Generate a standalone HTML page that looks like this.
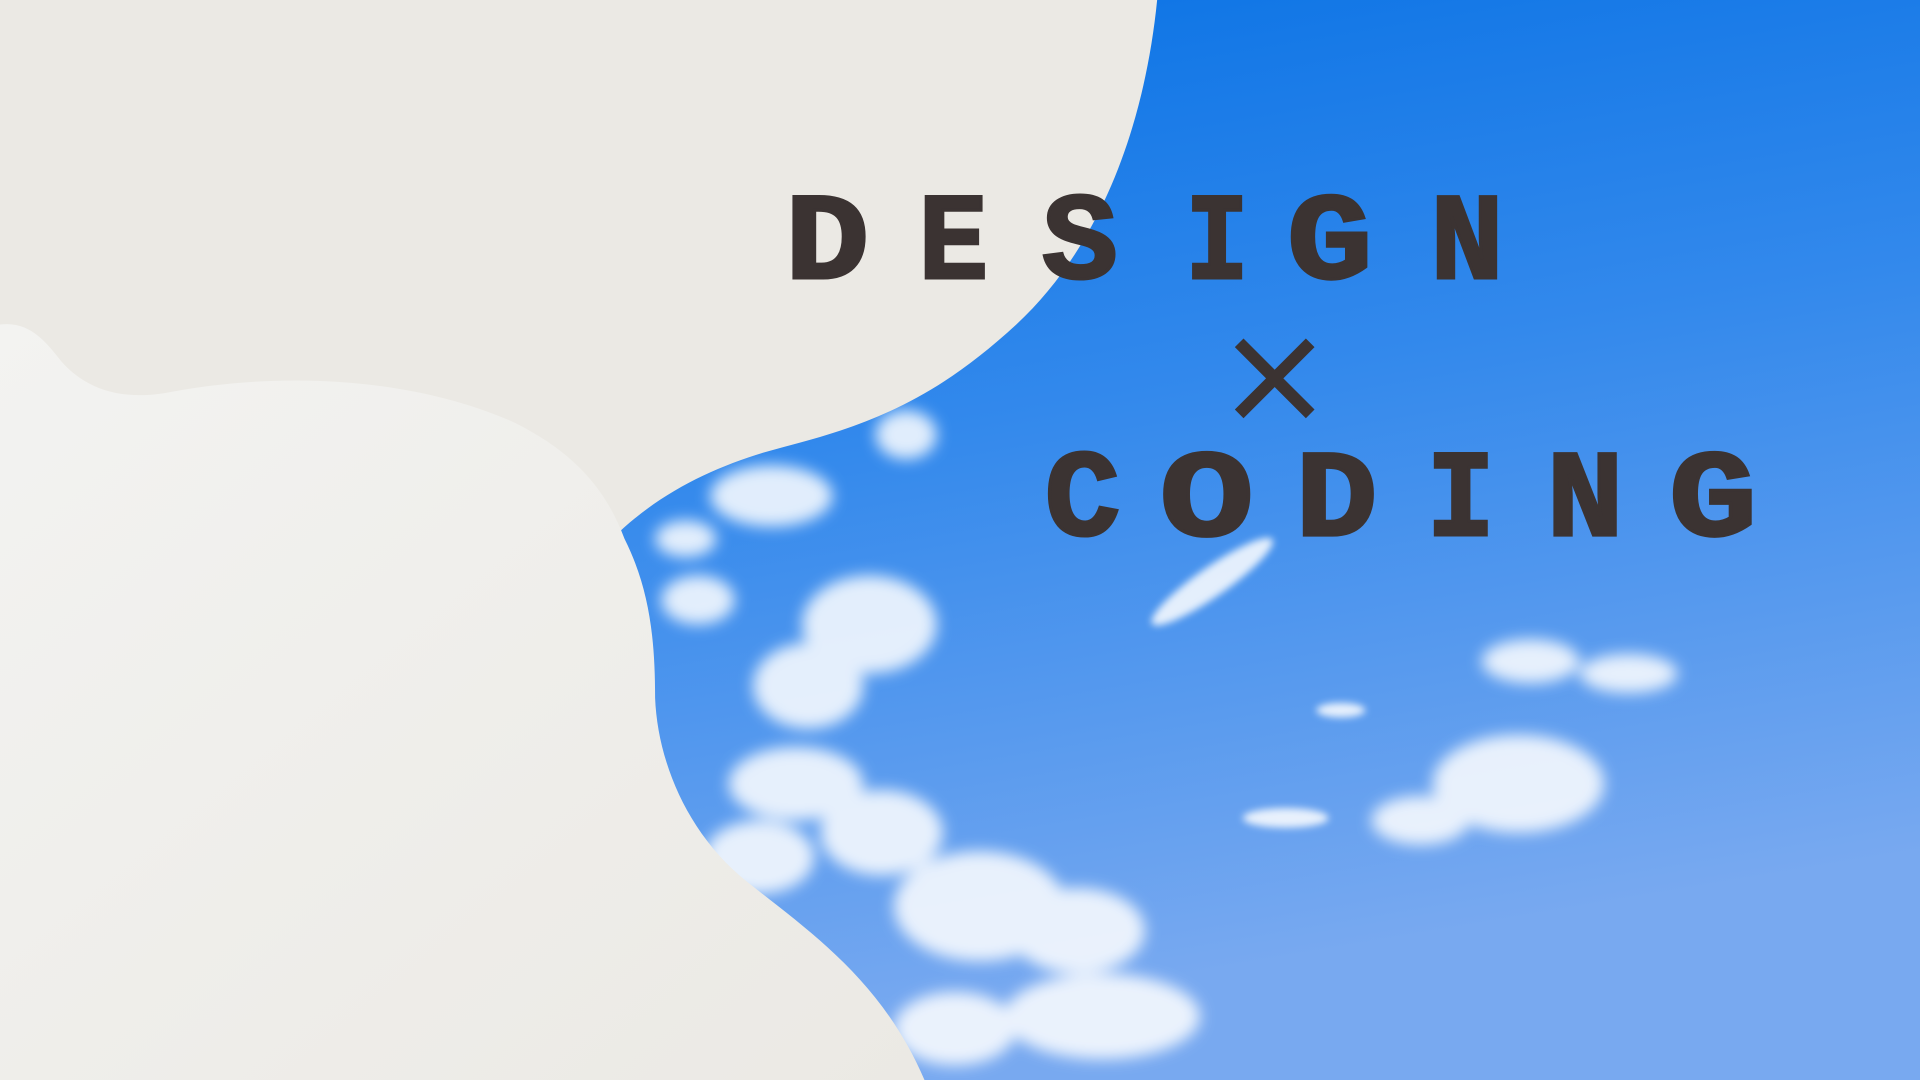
<!DOCTYPE html>
<html><head><meta charset="utf-8"><style>
html,body{margin:0;padding:0;width:1920px;height:1080px;overflow:hidden;background:#ebe9e4}
svg{display:block}
</style></head><body>
<svg width="1920" height="1080" viewBox="0 0 1568 882" preserveAspectRatio="none" xmlns="http://www.w3.org/2000/svg">
<defs>
<linearGradient id="sky" x1="0" y1="0" x2="0.3" y2="1">
<stop offset="0" stop-color="#006de3"/>
<stop offset="0.5" stop-color="#3389ec"/>
<stop offset="1" stop-color="#78a9f0"/>
</linearGradient>
<linearGradient id="low" x1="0" y1="0" x2="1" y2="1">
<stop offset="0" stop-color="#f3f3f1"/>
<stop offset="1" stop-color="#ebe9e4"/>
</linearGradient>
<filter id="bl" x="-50%" y="-50%" width="200%" height="200%"><feGaussianBlur stdDeviation="6"/></filter>
<filter id="bl2" x="-50%" y="-50%" width="200%" height="200%"><feGaussianBlur stdDeviation="3"/></filter>
</defs>
<rect width="1568" height="882" fill="url(#sky)"/>
<g fill="#ffffff" opacity="0.85" filter="url(#bl)">
<ellipse cx="710" cy="510" rx="55" ry="40"/>
<ellipse cx="660" cy="560" rx="45" ry="35"/>
<ellipse cx="650" cy="640" rx="55" ry="30"/>
<ellipse cx="720" cy="680" rx="50" ry="35"/>
<ellipse cx="620" cy="700" rx="45" ry="30"/>
<ellipse cx="800" cy="740" rx="70" ry="45"/>
<ellipse cx="880" cy="760" rx="55" ry="35"/>
<ellipse cx="900" cy="830" rx="80" ry="35"/>
<ellipse cx="780" cy="840" rx="50" ry="30"/>
<ellipse cx="630" cy="405" rx="50" ry="25"/>
<ellipse cx="740" cy="355" rx="25" ry="20"/>
<ellipse cx="570" cy="490" rx="30" ry="20"/>
<ellipse cx="560" cy="440" rx="25" ry="15"/>
<ellipse cx="1240" cy="640" rx="70" ry="40"/>
<ellipse cx="1160" cy="670" rx="40" ry="20"/>
<ellipse cx="1250" cy="540" rx="40" ry="18"/>
<ellipse cx="1330" cy="550" rx="40" ry="16"/>
</g>
<g fill="#ffffff" opacity="0.85" filter="url(#bl2)">
<ellipse cx="990" cy="475" rx="60" ry="12" transform="rotate(-35 990 475)"/>
<ellipse cx="1050" cy="668" rx="35" ry="8"/>
<ellipse cx="1095" cy="580" rx="20" ry="6"/>
</g>
<path d="M0 0 H945 C935 100 900 200 830 265 C770 320 720 345 640 365 C590 378 540 400 500 440 L0 440 Z" fill="#ebe9e4"/>
<path d="M0 265 C25 262 38 280 50 295 C70 318 100 328 140 320 C220 305 330 305 420 345 C470 370 495 400 510 440 C530 480 535 520 535 570 C537 620 560 680 610 720 C660 760 720 800 755 882 L0 882 Z" fill="url(#low)"/>
<g fill="#3b3332" stroke="#3b3332" stroke-width="2.5" font-family="'Liberation Mono','DejaVu Sans Mono',monospace" font-weight="bold" font-size="101">
<text x="641" y="227" textLength="69" lengthAdjust="spacingAndGlyphs">D</text>
<text x="750" y="227" textLength="57" lengthAdjust="spacingAndGlyphs">E</text>
<text x="851" y="227" textLength="62" lengthAdjust="spacingAndGlyphs">S</text>
<text x="968" y="227" textLength="52" lengthAdjust="spacingAndGlyphs">I</text>
<text x="1051" y="227" textLength="70" lengthAdjust="spacingAndGlyphs">G</text>
<text x="1168" y="227" textLength="60" lengthAdjust="spacingAndGlyphs">N</text>
<text x="853" y="437" textLength="62" lengthAdjust="spacingAndGlyphs">C</text>
<text x="947" y="437" textLength="77" lengthAdjust="spacingAndGlyphs">O</text>
<text x="1058" y="437" textLength="67" lengthAdjust="spacingAndGlyphs">D</text>
<text x="1165" y="437" textLength="56" lengthAdjust="spacingAndGlyphs">I</text>
<text x="1263" y="437" textLength="63" lengthAdjust="spacingAndGlyphs">N</text>
<text x="1363" y="437" textLength="72" lengthAdjust="spacingAndGlyphs">G</text>
</g>
<path d="M1012 280 L1070 338 M1070 280 L1012 338" stroke="#3b3332" stroke-width="10"/>
</svg>
</body></html>
